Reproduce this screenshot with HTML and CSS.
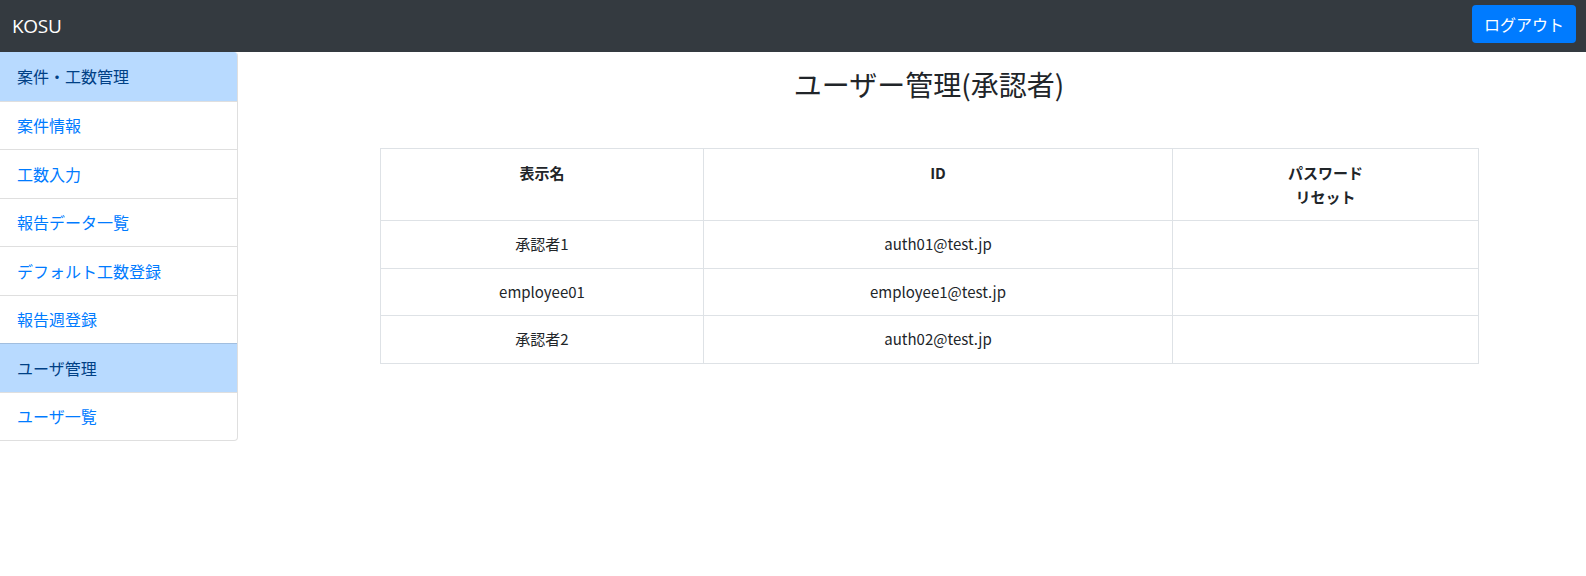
FILE: index.html
```html
<!DOCTYPE html>
<html lang="ja">
<head>
<meta charset="utf-8">
<title>KOSU</title>
<link rel="stylesheet" href="styles.css">
</head>
<body>
<nav class="navbar">
  <span class="brand">KOSU</span>
  <button class="btn-logout">ログアウト</button>
</nav>
<div class="layout">
  <aside class="sidebar">
    <div class="item head">案件・工数管理</div>
    <a class="item link">案件情報</a>
    <a class="item link">工数入力</a>
    <a class="item link">報告データ一覧</a>
    <a class="item link">デフォルト工数登録</a>
    <a class="item link">報告週登録</a>
    <div class="item head">ユーザ管理</div>
    <a class="item link">ユーザ一覧</a>
  </aside>
  <main class="main">
    <div class="content">
      <h3 class="title">ユーザー管理(承認者)</h3>
      <table class="users">
        <colgroup>
          <col class="c1"><col class="c2"><col class="c3">
        </colgroup>
        <tr class="hdr">
          <th>表示名</th>
          <th>ID</th>
          <th>パスワード<br>リセット</th>
        </tr>
        <tr><td>承認者1</td><td>auth01@test.jp</td><td></td></tr>
        <tr><td>employee01</td><td>employee1@test.jp</td><td></td></tr>
        <tr><td>承認者2</td><td>auth02@test.jp</td><td></td></tr>
      </table>
    </div>
  </main>
</div>
</body>
</html>
```
FILE: styles.css
```css
* { box-sizing: border-box; }
html, body { margin: 0; padding: 0; }
body {
  font-family: "Noto Sans CJK JP", "Noto Sans", sans-serif;
  font-size: 16px;
  line-height: 1.5;
  color: #212529;
  background: #fff;
}
.navbar {
  height: 52px;
  background: #343a40;
  display: flex;
  align-items: center;
  justify-content: space-between;
  padding: 0 10px 0 12px;
}
.brand {
  color: #fff;
  font-size: 19px;
  font-family: "Open Sans", "Noto Sans CJK JP", sans-serif;
  letter-spacing: -0.3px;
}
.btn-logout {
  background: #007bff;
  color: #fff;
  border: 0;
  border-radius: 4px;
  height: 38px;
  width: 104px;
  font-family: inherit;
  font-size: 16px;
  padding: 0;
  margin-top: -4px;
}
.layout {
  display: flex;
  align-items: flex-start;
}
.sidebar {
  width: 238px;
  flex: none;
  display: flex;
  flex-direction: column;
  border: 1px solid rgba(0,0,0,.125);
  border-left: 0;
  border-top: 0;
  border-radius: 0 4px 4px 0;
  overflow: hidden;
}
.item {
  height: 48.5px;
  display: flex;
  align-items: center;
  padding: 0 17px;
  font-size: 16px;
  border-top: 1px solid rgba(0,0,0,.125);
}
.item:first-child { border-top: 0; }
.head {
  background: #b8daff;
  color: #004085;
}
.link { color: #007bff; }
.main { flex: 1; }
.content {
  width: 1098px;
  margin-left: 142px;
  display: flex;
  flex-direction: column;
}
.title {
  margin: 12px 0 0;
  font-size: 28px;
  font-weight: 400;
  line-height: 40px;
  text-align: center;
  height: 84px;
}
.users {
  border-collapse: collapse;
  width: 1098px;
  table-layout: fixed;
  font-size: 15px;
}
.c1 { width: 323px; }
.c2 { width: 469px; }
.c3 { width: 306px; }
.users th, .users td {
  border: 1px solid #dee2e6;
  text-align: center;
  padding: 12px 12px 11px;
}
.users th {
  vertical-align: top;
  font-weight: 700;
  line-height: 24px;
  height: 72px;
}
.users td { vertical-align: middle; line-height: 24px; height: 47.5px; padding: 0 12px; }
```
